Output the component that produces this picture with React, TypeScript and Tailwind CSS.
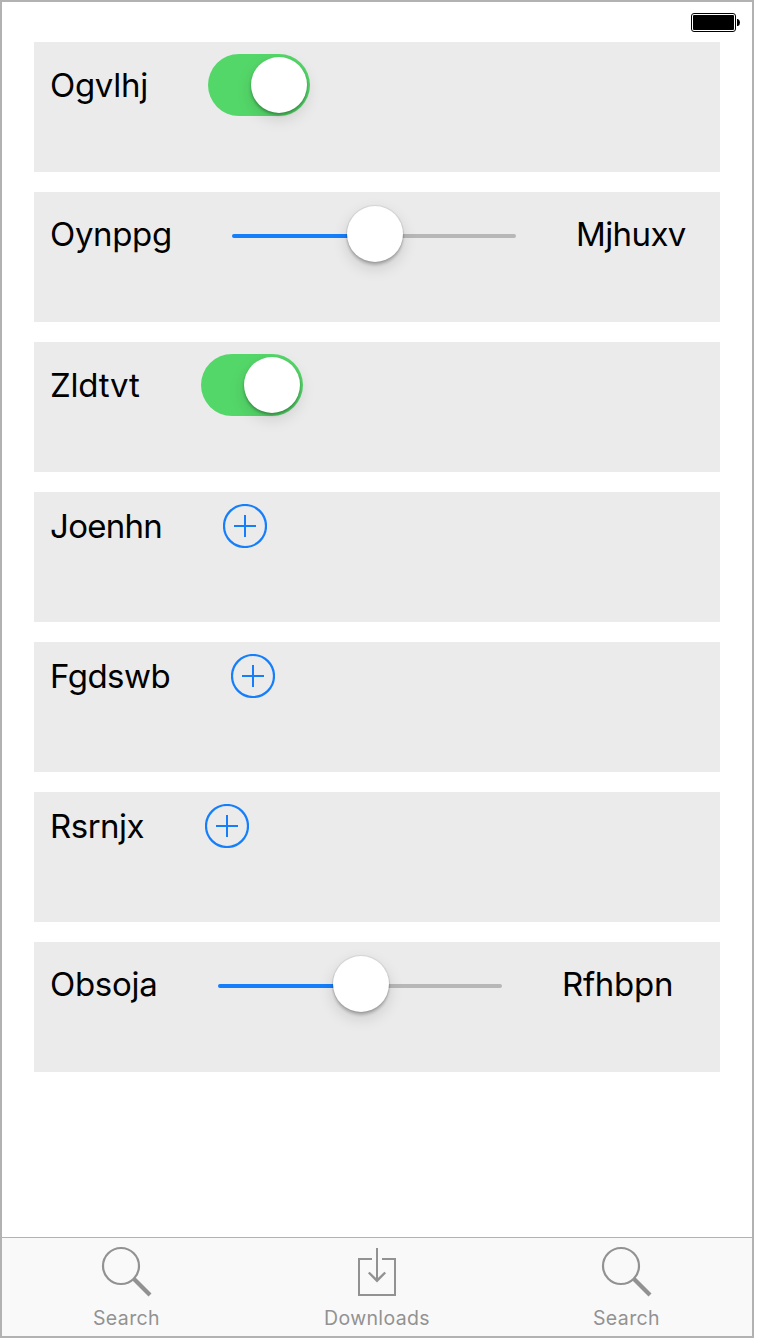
import React from "react";

type LabelProps = { text: string; className: string };

function Label({ text, className }: LabelProps) {
  return (
    <span className={`block shrink-0 whitespace-nowrap text-[33px] leading-[40px] text-black ${className}`}>
      {text}
    </span>
  );
}

function Card({ className, children }: { className: string; children: React.ReactNode }) {
  return (
    <section className={`flex h-[130px] w-[686px] items-start gap-[60px] bg-[#ebebeb] pl-4 ${className}`}>
      {children}
    </section>
  );
}

function Toggle() {
  return (
    <button
      role="switch"
      aria-checked="true"
      className="flex h-[62px] w-[102px] shrink-0 items-center justify-end rounded-full bg-[#54d769] pr-[3px]"
    >
      <span className="size-14 rounded-full bg-white shadow-[0_6px_16px_rgba(0,0,0,0.13),0_2px_3px_rgba(0,0,0,0.3)]" />
    </button>
  );
}

function Slider() {
  return (
    <div className="mt-px flex h-[62px] w-[284px] shrink-0 items-center">
      <span className="h-1 w-[116px] rounded-l-full bg-[#157efb]" />
      <span className="z-10 -mx-px mb-1 size-14 rounded-full bg-white shadow-[0_6px_16px_rgba(0,0,0,0.14),0_3px_3px_rgba(0,0,0,0.2),0_0_1px_1px_rgba(0,0,0,0.08)]" />
      <span className="h-1 flex-1 rounded-r-full bg-[#b7b7b7]" />
    </div>
  );
}

function AddButton() {
  return (
    <button className="size-11 shrink-0">
      <svg viewBox="0 0 44 44" className="size-11" fill="none" stroke="#157efb" strokeWidth="2">
        <circle cx="22" cy="22" r="21" strokeWidth="2.2" />
        <path d="M11 22H33M22 11V33" />
      </svg>
    </button>
  );
}

function SearchIcon() {
  return (
    <svg viewBox="0 0 52 52" className="size-[52px]" fill="none" stroke="#929292">
      <circle cx="20" cy="21" r="18" strokeWidth="2.2" />
      <path d="M32.5 33.5L49 50" strokeWidth="4.2" />
    </svg>
  );
}

function DownloadIcon() {
  return (
    <svg viewBox="0 0 52 52" className="size-[52px]" fill="none" stroke="#929292" strokeWidth="2">
      <path d="M21 14H8V50H44V14H31M26 3V36" />
      <path d="M17.8 27.5L26 35.7L34.2 27.5" strokeWidth="2.4" />
    </svg>
  );
}

function Tab({ label, icon, className }: { label: string; icon: React.ReactNode; className: string }) {
  return (
    <a className="flex w-[250px] flex-col items-center pt-[7px]">
      {icon}
      <span className={`mt-[9px] text-[19.5px] leading-[24px] whitespace-nowrap text-[#929292] ${className}`}>{label}</span>
    </a>
  );
}

export default function App() {
  return (
    <div className="flex h-[1338px] w-[754px] flex-col border-2 border-[#b2b2b2] bg-white font-['Inter',sans-serif]">
      <header className="flex h-10 shrink-0 items-start justify-end pt-[11px] pr-3">
        <svg viewBox="0 0 50 19" className="h-[19px] w-[50px]">
          <rect x="1.5" y="0.5" width="44" height="18" rx="2.5" fill="none" stroke="#000" />
          <rect x="3" y="2" width="41" height="15" rx="1" />
          <path d="M47 6h1q2 1 2 3.5t-2 3.5h-1z" />
        </svg>
      </header>
      <main className="flex flex-1 flex-col gap-5 pl-8">
        <Card className="pt-3">
          <Label text="Ogvlhj" className="mt-[11px] w-[98px] tracking-[-0.3px]" />
          <Toggle />
        </Card>
        <Card className="pt-3">
          <Label text="Oynppg" className="mt-[10px] w-[122px] tracking-[-0.35px]" />
          <Slider />
          <Label text="Mjhuxv" className="mt-[10px] w-[110px] tracking-[-0.6px]" />
        </Card>
        <Card className="pt-3">
          <Label text="Zldtvt" className="mt-[11px] w-[91px] tracking-[-0.2px]" />
          <Toggle />
        </Card>
        <Card className="pt-3">
          <Label text="Joenhn" className="mt-[2px] w-[113px] tracking-[-0.7px]" />
          <AddButton />
        </Card>
        <Card className="pt-3">
          <Label text="Fgdswb" className="mt-[2px] w-[121px] tracking-[-0.5px]" />
          <AddButton />
        </Card>
        <Card className="pt-3">
          <Label text="Rsrnjx" className="mt-[2px] w-[95px] tracking-[-0.5px]" />
          <AddButton />
        </Card>
        <Card className="pt-3">
          <Label text="Obsoja" className="mt-[10px] w-[108px] tracking-[-0.3px]" />
          <Slider />
          <Label text="Rfhbpn" className="mt-[10px] w-[112px] tracking-[-0.3px]" />
        </Card>
      </main>
      <nav className="flex h-[99px] shrink-0 border-t border-[#b2b2b2] bg-[#f9f9f9]">
        <Tab label="Search" icon={<SearchIcon />} className="-ml-px tracking-[0.4px]" />
        <Tab label="Downloads" icon={<DownloadIcon />} className="tracking-[0.35px]" />
        <Tab label="Search" icon={<SearchIcon />} className="-ml-px tracking-[0.4px]" />
      </nav>
    </div>
  );
}
